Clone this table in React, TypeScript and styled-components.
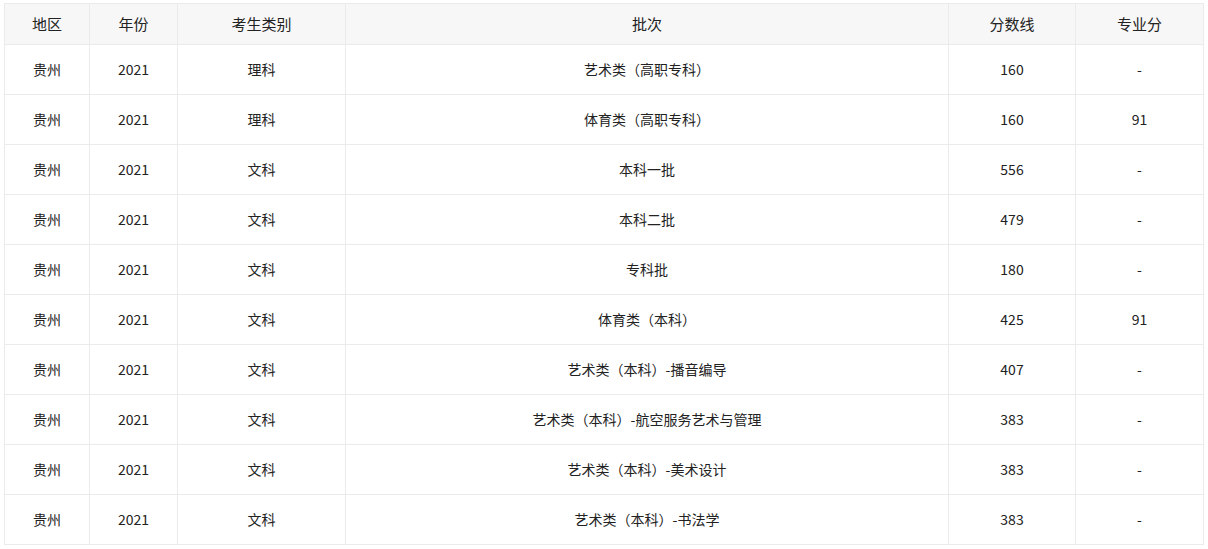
import * as React from 'react';
import styled, { createGlobalStyle } from 'styled-components';

interface Row {
  area: string;
  year: number;
  kind: string;
  batch: string;
  score: number;
  major: string;
}

const rows: Row[] = [
  { area: '贵州', year: 2021, kind: '理科', batch: '艺术类（高职专科）', score: 160, major: '-' },
  { area: '贵州', year: 2021, kind: '理科', batch: '体育类（高职专科）', score: 160, major: '91' },
  { area: '贵州', year: 2021, kind: '文科', batch: '本科一批', score: 556, major: '-' },
  { area: '贵州', year: 2021, kind: '文科', batch: '本科二批', score: 479, major: '-' },
  { area: '贵州', year: 2021, kind: '文科', batch: '专科批', score: 180, major: '-' },
  { area: '贵州', year: 2021, kind: '文科', batch: '体育类（本科）', score: 425, major: '91' },
  { area: '贵州', year: 2021, kind: '文科', batch: '艺术类（本科）-播音编导', score: 407, major: '-' },
  { area: '贵州', year: 2021, kind: '文科', batch: '艺术类（本科）-航空服务艺术与管理', score: 383, major: '-' },
  { area: '贵州', year: 2021, kind: '文科', batch: '艺术类（本科）-美术设计', score: 383, major: '-' },
  { area: '贵州', year: 2021, kind: '文科', batch: '艺术类（本科）-书法学', score: 383, major: '-' },
];

const columns = [
  { title: '地区', width: 85 },
  { title: '年份', width: 88 },
  { title: '考生类别', width: 168 },
  { title: '批次', width: 603 },
  { title: '分数线', width: 127 },
  { title: '专业分', width: 128 },
];

const App: React.FunctionComponent = (): React.ReactElement => (
  <React.Fragment>
    <GlobalStyle />
    <Page>
      <Table>
        <colgroup>
          {columns.map((c) => (
            <col key={c.title} style={{ width: c.width }} />
          ))}
        </colgroup>
        <thead>
          <tr>
            {columns.map((c) => (
              <HeadCell key={c.title}>{c.title}</HeadCell>
            ))}
          </tr>
        </thead>
        <tbody>
          {rows.map((r, i) => (
            <tr key={i}>
              <Cell>{r.area}</Cell>
              <Cell>{r.year}</Cell>
              <Cell>{r.kind}</Cell>
              <Cell>{r.batch}</Cell>
              <Cell>{r.score}</Cell>
              <Cell>{r.major}</Cell>
            </tr>
          ))}
        </tbody>
      </Table>
    </Page>
  </React.Fragment>
);

export default App;

// Styled components

const GlobalStyle = createGlobalStyle`
  body {
    margin: 0;
    background: #ffffff;
    font-family: "Noto Sans CJK SC", "Noto Sans", sans-serif;
    color: #222222;
  }
`;

const Page = styled('div')`
  padding: 3px 4px;
`;

const Table = styled('table')`
  border-collapse: collapse;
  table-layout: fixed;
  width: 1200px;
`;

const HeadCell = styled('th')`
  background-color: #f7f7f7;
  border: 1px solid #ebebeb;
  color: #222222;
  font-size: 15px;
  font-weight: normal;
  height: 39px;
  padding: 0 0 1px;
  text-align: center;
`;

const Cell = styled('td')`
  border: 1px solid #ebebeb;
  color: #222222;
  font-size: 14px;
  height: 47px;
  padding: 0 0 2px;
  text-align: center;
`;
